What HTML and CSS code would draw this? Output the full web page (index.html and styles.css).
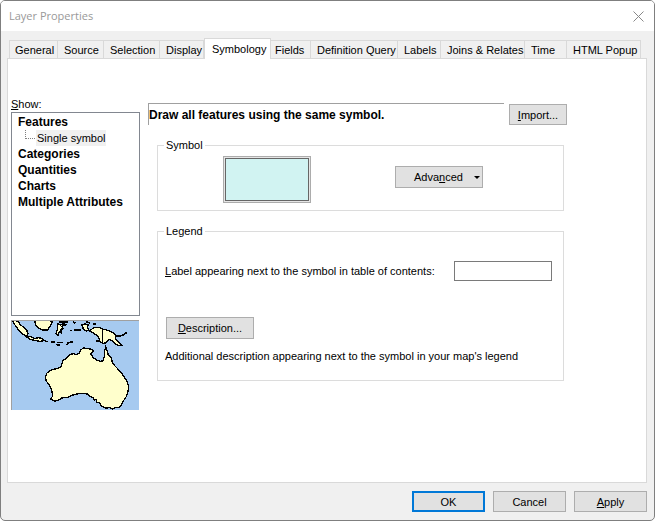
FILE: index.html
```
<!DOCTYPE html>
<html lang="en">
<head>
    <meta charset="UTF-8">
    <meta name="viewport" content="width=device-width, initial-scale=1.0">
    <title>Layer Properties</title>
    <link rel="stylesheet" href="styles.css">
</head>
<body>
    <div class="dialog">
        <div class="titlebar">
            <span class="title">Layer Properties</span>
            <button class="close" aria-label="Close">
                <svg width="11" height="11" viewBox="0 0 11 11"><path d="M0.5 0.5L10.5 10.5M10.5 0.5L0.5 10.5" stroke="#888" fill="none"/></svg>
            </button>
        </div>

        <div class="tabs" role="tablist">
            <button class="tab" role="tab">General</button>
            <button class="tab" role="tab">Source</button>
            <button class="tab" role="tab">Selection</button>
            <button class="tab" role="tab">Display</button>
            <button class="tab active" role="tab" aria-selected="true">Symbology</button>
            <button class="tab tight" role="tab">Fields</button>
            <button class="tab" role="tab">Definition Query</button>
            <button class="tab" role="tab">Labels</button>
            <button class="tab" role="tab">Joins &amp; Relates</button>
            <button class="tab" role="tab">Time</button>
            <button class="tab" role="tab">HTML Popup</button>
        </div>

        <div class="panel">
            <div class="sidebar">
                <div class="show-label" id="show-label"><u>S</u>how:</div>
                <ul class="tree" aria-labelledby="show-label">
                    <li>Features
                        <ul class="branch">
                            <li><span class="selected">Single symbol</span></li>
                        </ul>
                    </li>
                    <li>Categories</li>
                    <li>Quantities</li>
                    <li>Charts</li>
                    <li>Multiple Attributes</li>
                </ul>
                <svg class="map" viewBox="33 30 384 270" shape-rendering="crispEdges">
                    <rect x="33" y="30" width="384" height="270" fill="#a6caf0"/>
                    <g fill="#ffffcc" stroke="#000" stroke-width="4">
                        <!-- Australia -->
                        <path d="M317 111L322 125L325 135L333 143L338 160L345 168L352 175L358 182L365 190L372 200L380 212L383 220L386 232L384 245L380 258L372 270L365 283L360 291L345 293L338 297L328 293L318 294L305 289L300 280L290 276L288 268L284 270L278 262L270 260L262 252L245 250L230 252L215 256L205 262L185 264L177 270L165 273L152 267L158 258L155 240L148 225L138 212L137 200L140 190L148 183L160 178L172 176L184 170L186 160L190 150L198 147L205 138L212 133L220 131L230 134L238 130L241 121L250 114L262 115L275 118L280 122L272 132L280 143L290 150L300 154L308 153L313 140L313 125Z"/>
                        <!-- New Guinea -->
                        <path d="M268 63L276 57L285 52L296 52L308 57L320 60L332 65L342 70L349 78L345 84L352 93L362 101L366 107L354 106L344 100L336 92L328 88L322 92L317 99L307 100L300 94L288 94L298 90L296 82L288 74L278 68Z"/>
                        <path d="M307 57V100"/>
                        <path d="M246 45L255 41L265 45L262 52L267 60L258 63L250 57Z"/>
                        <!-- Sumatra, Java, Borneo, Sulawesi -->
                        <path d="M37 33L45 45L52 55L62 66L72 75L80 79L84 71L80 60L70 51L62 45L55 35L46 32Z"/>
                        <path d="M80 81L94 80L102 86L116 83L128 86L132 92L120 94L104 91L90 88Z"/>
                        <path d="M104 32L108 46L116 55L128 60L142 60L150 50L157 34L146 32Z"/>
                        <path d="M172 40L182 45L194 40L186 50L190 56L182 58L184 70L178 64L174 76L168 70L172 58Z"/>
                    </g>
                    <g fill="none" stroke="#000" stroke-width="5">
                        <path d="M134 93L144 95M152 96H166M170 97H190M168 103L180 106M200 104L205 98L218 96M176 37L205 36M192 47L200 42M211 61H217M222 60H244M220 35L226 40M258 35L270 39M280 41H287"/>
                        <path d="M352 79L368 76L376 70L380 69"/>
                    </g>
                    <path d="M35 300V32H417" fill="none" stroke="#a0a0a0" stroke-width="3"/>
                </svg>
            </div>

            <div class="main">
                <div class="headline">
                    <div class="heading">Draw all features using the same symbol.</div>
                    <button class="btn import"><u>I</u>mport...</button>
                </div>

                <fieldset class="group">
                    <legend>Symbol</legend>
                    <div class="symbol">
                        <button class="swatch" aria-label="Symbol"></button>
                        <button class="btn wide advanced">
                            <span>Adva<u>n</u>ced</span>
                            <svg width="6" height="3" viewBox="0 0 6 3"><path d="M0 0H6L3 3Z"/></svg>
                        </button>
                    </div>
                </fieldset>

                <fieldset class="group">
                    <legend>Legend</legend>
                    <div class="field">
                        <label for="toc-label"><u>L</u>abel appearing next to the symbol in table of contents:</label>
                        <input type="text" id="toc-label">
                    </div>
                    <button class="btn wide description"><u>D</u>escription...</button>
                    <p class="note">Additional description appearing next to the symbol in your map's legend</p>
                </fieldset>
            </div>
        </div>

        <div class="footer">
            <button class="btn default">OK</button>
            <button class="btn">Cancel</button>
            <button class="btn"><u>A</u>pply</button>
        </div>
    </div>
</body>
</html>
```

FILE: styles.css
```
* {
    box-sizing: border-box;
}
body {
    margin: 0;
    background-color: #fff;
    color: #000;
    font-family: "Liberation Sans", sans-serif;
    font-size: 11px;
    line-height: 14px;
}
button, input {
    font: inherit;
    color: inherit;
}
u {
    text-underline-offset: 1px;
}
.dialog {
    display: flex;
    flex-direction: column;
    min-height: 100vh;
    border: 1px solid #7f7f7f;
    border-radius: 5px;
    background-color: #f0f0f0;
    overflow: hidden;
}
.titlebar {
    display: flex;
    justify-content: space-between;
    align-items: center;
    height: 30px;
    padding: 0 8px;
    background-color: #fff;
    color: #999;
    font-family: "Open Sans", sans-serif;
}
.close {
    display: flex;
    padding: 2px;
    border: none;
    background: none;
}
.tabs {
    display: grid;
    grid-template-columns: 49px 46px 56px 44px 67px 40px 87px 43px 84px 42px 74px;
    align-items: end;
    height: 27px;
    padding-left: 8px;
}
.tab {
    height: 18px;
    padding: 1px 0 0 6px;
    border: 1px solid #d9d9d9;
    border-width: 1px 1px 0 0;
    background-color: #f0f0f0;
    text-align: left;
    white-space: nowrap;
}
.tab:first-child {
    border-left-width: 1px;
    padding-left: 5px;
}
.tab.tight {
    padding-left: 4px;
}
.tab.active {
    position: relative;
    height: 21px;
    margin-bottom: -1px;
    padding: 0 0 1px 7px;
    border-left-width: 1px;
    background-color: #fff;
}
.panel {
    display: flex;
    flex: 1;
    gap: 8px;
    margin: 0 7px 0 6px;
    padding: 38px 79px 0 3px;
    border: 1px solid #d9d9d9;
    background-color: #fff;
}
.sidebar {
    flex: 0 0 129px;
}
.show-label {
    height: 15px;
}
.tree, .branch {
    margin: 0;
    padding: 0;
    list-style: none;
}
.tree {
    height: 204px;
    padding: 1px 6px;
    border: 1px solid #828790;
    font-size: 12px;
    font-weight: bold;
    line-height: 16px;
    white-space: nowrap;
}
.branch {
    padding-left: 7px;
    font-size: 11px;
    font-weight: normal;
}
.branch li {
    display: flex;
    height: 16px;
}
.branch li::before {
    content: "";
    width: 9px;
    height: 8px;
    border-left: 1px dotted #808080;
    border-bottom: 1px dotted #808080;
}
.selected {
    margin-left: 1px;
    padding: 0 1px;
    background-color: #f0f0f0;
}
.map {
    display: block;
    width: 128px;
    height: 90px;
    margin-top: 4px;
}
.main {
    flex: 1;
    padding-top: 6px;
}
.headline {
    display: flex;
    gap: 5px;
    align-items: flex-end;
    height: 22px;
}
.heading {
    flex: 1;
    height: 22px;
    border: 1px solid #a0a0a0;
    border-width: 1px 0 0 1px;
    font-size: 12px;
    font-weight: bold;
    line-height: 22px;
}
.btn {
    width: 73px;
    height: 21px;
    padding: 0;
    border: 1px solid #adadad;
    background-color: #e1e1e1;
}
.btn.import {
    width: 58px;
}
.btn.wide {
    width: 88px;
    height: 22px;
}
.btn.default {
    border: 2px solid #0078d7;
}
.group {
    margin: 13px 3px 0 9px;
    padding: 0 8px 0 7px;
    border: 1px solid #dcdcdc;
}
.group legend {
    margin-left: -1px;
    padding: 0 2px;
}
.symbol {
    display: flex;
    gap: 84px;
    padding: 4px 0 7px 58px;
}
.swatch {
    width: 88px;
    height: 47px;
    padding: 0;
    border: 1px solid #acacac;
    background-color: #d1f3f2;
    box-shadow: inset 0 0 0 1px #e5e5e5, inset 0 0 0 2px #666;
}
.advanced {
    display: flex;
    align-items: center;
    justify-content: space-between;
    margin-top: 10px;
    padding: 0 2px 0 18px;
}
.field {
    display: flex;
    justify-content: space-between;
    align-items: center;
    padding: 23px 3px 0 0;
}
.field input {
    width: 98px;
    height: 20px;
    border: 1px solid #7a7a7a;
    background-color: #fff;
}
.description {
    display: block;
    margin: 36px 0 0 1px;
}
.note {
    margin: 10px 0 17px;
    white-space: nowrap;
}
.footer {
    display: flex;
    justify-content: flex-end;
    gap: 8px;
    padding: 8px 7px;
}
```
